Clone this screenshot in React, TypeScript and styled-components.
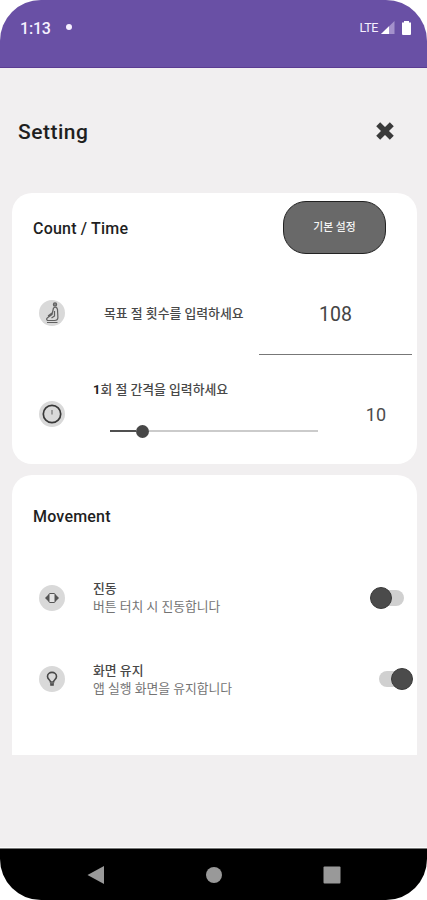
import React from "react";
import styled, { createGlobalStyle } from "styled-components";

const GlobalStyle = createGlobalStyle`
  * { box-sizing: border-box; }
  body { margin: 0; background: #fff; }
`;

const Phone = styled.div`
  width: 427px;
  height: 900px;
  border-radius: 41px;
  overflow: hidden;
  display: flex;
  flex-direction: column;
  background: #f1eff0;
  color: #1f1f1f;
  font-family: Roboto, "Noto Sans CJK KR", sans-serif;
`;

const StatusBar = styled.header`
  height: 68px;
  flex: none;
  display: flex;
  align-items: flex-start;
  padding: 18px 14px 0 20px;
  background: #6950a5;
  border-bottom: 1px solid #5b3c92;
  color: #f6f0ff;
`;

const Clock = styled.span`
  width: 46px;
  font-size: 16px;
  font-weight: 500;
  letter-spacing: -0.2px;
  line-height: 21px;
`;

const NoticeDot = styled.span`
  width: 6px;
  height: 6px;
  margin-top: 6px;
  border-radius: 50%;
  background: #f6f0ff;
`;

const Signal = styled.div`
  margin-left: auto;
  display: flex;
  align-items: center;
  font-size: 12.5px;
  letter-spacing: -0.4px;
  line-height: 19px;
  svg { display: block; }
`;

const TitleBar = styled.div`
  height: 125px;
  flex: none;
  display: flex;
  align-items: center;
  justify-content: space-between;
  padding: 0 32px 0 18px;
`;

const PageTitle = styled.h1`
  margin: 3px 0 0;
  font-size: 21px;
  font-weight: 500;
  line-height: 26px;
  letter-spacing: 0.5px;
`;

const Card = styled.section<{ $height: number; $open?: boolean }>`
  height: ${(p) => p.$height}px;
  flex: none;
  margin: 0 10px 11px 12px;
  background: #fff;
  border-radius: ${(p) => (p.$open ? "20px 20px 0 0" : "20px")};
`;

const CardHead = styled.div<{ $height: number }>`
  height: ${(p) => p.$height}px;
  display: flex;
  align-items: center;
  justify-content: space-between;
  padding: 0 31px 0 21px;
`;

const CardTitle = styled.h2`
  margin: 2px 0 0;
  font-size: 16px;
  font-weight: 500;
  line-height: 20px;
  letter-spacing: 0.2px;
`;

const DefaultsButton = styled.button`
  width: 103px;
  height: 53px;
  padding: 1px 0 0;
  margin-bottom: 1px;
  border: 1px solid #222;
  border-radius: 23px;
  background: #696969;
  color: #f4f4f4;
  font: 500 10.8px/16px Roboto, "Noto Sans CJK KR", sans-serif;
`;

const Row = styled.div<{ $height: number }>`
  height: ${(p) => p.$height}px;
  display: flex;
  align-items: center;
  padding-left: 27px;
`;

const Badge = styled.span`
  width: 26px;
  height: 26px;
  flex: none;
  display: grid;
  place-items: center;
  border-radius: 50%;
  background: #d9d9d9;
`;

const Label = styled.span<{ $indent?: number }>`
  margin-left: ${(p) => p.$indent ?? 0}px;
  padding-top: ${(p) => (p.$indent ? 2 : 0)}px;
  color: #484848;
  font-size: 12.85px;
  font-weight: 500;
  line-height: 18px;
  white-space: nowrap;
  b { color: #222; font-weight: 700; }
`;

const CountField = styled.div`
  width: 153px;
  height: 83px;
  margin: 0 5px 0 auto;
  padding-top: 3px;
  display: grid;
  place-items: center;
  border-bottom: 1px solid #777;
  color: #444;
  font-size: 19.5px;
  letter-spacing: 0.1px;
`;

const Interval = styled.div`
  width: 226px;
  margin: -8px 0 0 28px;
  display: flex;
  flex-direction: column;
  gap: 25px;
`;

const Track = styled.div`
  height: 14px;
  margin-left: 17px;
  width: 208px;
  display: flex;
  align-items: center;
`;

const Filled = styled.span`
  width: 26px;
  height: 2px;
  background: #505050;
`;

const Thumb = styled.span`
  width: 13px;
  height: 13px;
  border-radius: 50%;
  background: #474747;
`;

const Remaining = styled.span`
  flex: 1;
  height: 2px;
  background: #cbcbcb;
`;

const IntervalValue = styled.span`
  margin: 2px 31px 0 auto;
  color: #4c4c4c;
  font-size: 18px;
  line-height: 22px;
`;

const OptionText = styled.div`
  margin: 0 0 0 28px;
  display: flex;
  flex-direction: column;
`;

const Hint = styled.span`
  color: #737373;
  font-size: 12.8px;
  line-height: 17px;
  white-space: nowrap;
`;

const Switch = styled.button<{ $on?: boolean }>`
  width: 34px;
  height: 22px;
  padding: 0;
  border: 0;
  margin: 0 ${(p) => (p.$on ? 4 : 13)}px 0 auto;
  display: flex;
  flex-direction: ${(p) => (p.$on ? "row-reverse" : "row")};
  align-items: center;
  isolation: isolate;
  background: none;
`;

const Knob = styled.span`
  width: 22px;
  height: 22px;
  flex: none;
  border-radius: 50%;
  background: #4b4b4b;
  border: 1px solid #3a3a3a;
`;

const Tail = styled.span<{ $on?: boolean }>`
  width: 22px;
  height: 16px;
  flex: none;
  margin: ${(p) => (p.$on ? "0 -10px 0 0" : "0 0 0 -10px")};
  z-index: -1;
  border-radius: 8px;
  background: #d0d0d0;
`;

const NavBar = styled.nav`
  height: 52px;
  flex: none;
  margin-top: auto;
  display: flex;
  justify-content: center;
  gap: 100px;
  padding: 17px 0;
  background: #000;
  border-top: 1px solid #777;
  box-shadow: 0 -1px #fcfcfc;
  svg { display: block; }
`;

const Toggle = ({ on }: { on?: boolean }) => (
  <Switch $on={on} role="switch" aria-checked={!!on}>
    <Knob />
    <Tail $on={on} />
  </Switch>
);

export default function App() {
  return (
    <>
      <GlobalStyle />
      <Phone>
        <StatusBar>
          <Clock>1:13</Clock>
          <NoticeDot />
          <Signal>
            LTE
            <svg width="35" height="17" viewBox="0 0 35 17">
              <path d="M3 15 16.500 2v13z" fill="#a491cc" />
              <path d="M3 15 11 7.300V15z" fill="#fff" />
              <path d="M24 3.500h2V2h5v1.500h2V15q0 1-1 1h-7q-1 0-1-1z" fill="#fff" />
            </svg>
          </Signal>
        </StatusBar>

        <TitleBar>
          <PageTitle>Setting</PageTitle>
          <svg width="20" height="20" viewBox="0 0 20 20">
            <path d="M3.200 3.200 16.800 16.800M16.800 3.200 3.200 16.800" stroke="#3a3a3a" strokeWidth="5.600" />
          </svg>
        </TitleBar>

        <Card $height={271}>
          <CardHead $height={70}>
            <CardTitle>Count / Time</CardTitle>
            <DefaultsButton>기본 설정</DefaultsButton>
          </CardHead>
          <Row $height={100}>
            <Badge>
              <svg width="22" height="24" viewBox="0 0 22 24" fill="none" stroke="#606060" strokeWidth="1.200" strokeLinejoin="round">
                <circle cx="14" cy="3.500" r="1.600" fill="#888" />
                <path d="M12.500 7q3-2 4 1.500l.4 8q0 3-3.400 3H6.500q-1.800-1.500 0-2.800L11 13.500zM11 12l-4 3M13.500 10v5l-3 2M6 21.500h10.500" />
              </svg>
            </Badge>
            <Label $indent={39}>목표 절 횟수를 입력하세요</Label>
            <CountField>108</CountField>
          </Row>
          <Row $height={101}>
            <Badge>
              <svg width="22" height="22" viewBox="0 0 22 22" fill="none">
                <circle cx="11" cy="11" r="8.700" stroke="#383838" strokeWidth="1.700" />
                <path d="M11 7v4.500" stroke="#888" strokeWidth="1.500" />
              </svg>
            </Badge>
            <Interval>
              <Label><b>1</b>회 절 간격을 입력하세요</Label>
              <Track>
                <Filled />
                <Thumb />
                <Remaining />
              </Track>
            </Interval>
            <IntervalValue>10</IntervalValue>
          </Row>
        </Card>

        <Card $height={280} $open>
          <CardHead $height={82}>
            <CardTitle>Movement</CardTitle>
          </CardHead>
          <Row $height={81}>
            <Badge>
              <svg width="18" height="18" viewBox="0 0 18 18">
                <path d="M6 5 2 9l4 4zM12 5l4 4-4 4z" fill="#555" />
                <rect x="6" y="4.500" width="6" height="9" rx="1" fill="#e3e3e3" stroke="#555" />
              </svg>
            </Badge>
            <OptionText>
              <Label>진동</Label>
              <Hint>버튼 터치 시 진동합니다</Hint>
            </OptionText>
            <Toggle />
          </Row>
          <Row $height={82}>
            <Badge>
              <svg width="18" height="18" viewBox="0 0 18 18" fill="none" stroke="#484848" strokeWidth="1.600">
                <path d="M7.500 12c0-2-3-2.800-3-5.600a4.500 4 0 0 1 9 0C13.500 9.200 10.500 10 10.500 12zM8 13v2h2v-2" />
              </svg>
            </Badge>
            <OptionText>
              <Label>화면 유지</Label>
              <Hint>앱 실행 화면을 유지합니다</Hint>
            </OptionText>
            <Toggle on />
          </Row>
        </Card>

        <NavBar>
          <svg width="18" height="18" viewBox="0 0 18 18"><path d="M.5 9 17 0v18z" fill="#999" /></svg>
          <svg width="18" height="18" viewBox="0 0 18 18"><circle cx="9" cy="9" r="8" fill="#999" /></svg>
          <svg width="18" height="18" viewBox="0 0 18 18"><rect x=".5" y=".5" width="17" height="17" rx="1" fill="#999" /></svg>
        </NavBar>
      </Phone>
    </>
  );
}
